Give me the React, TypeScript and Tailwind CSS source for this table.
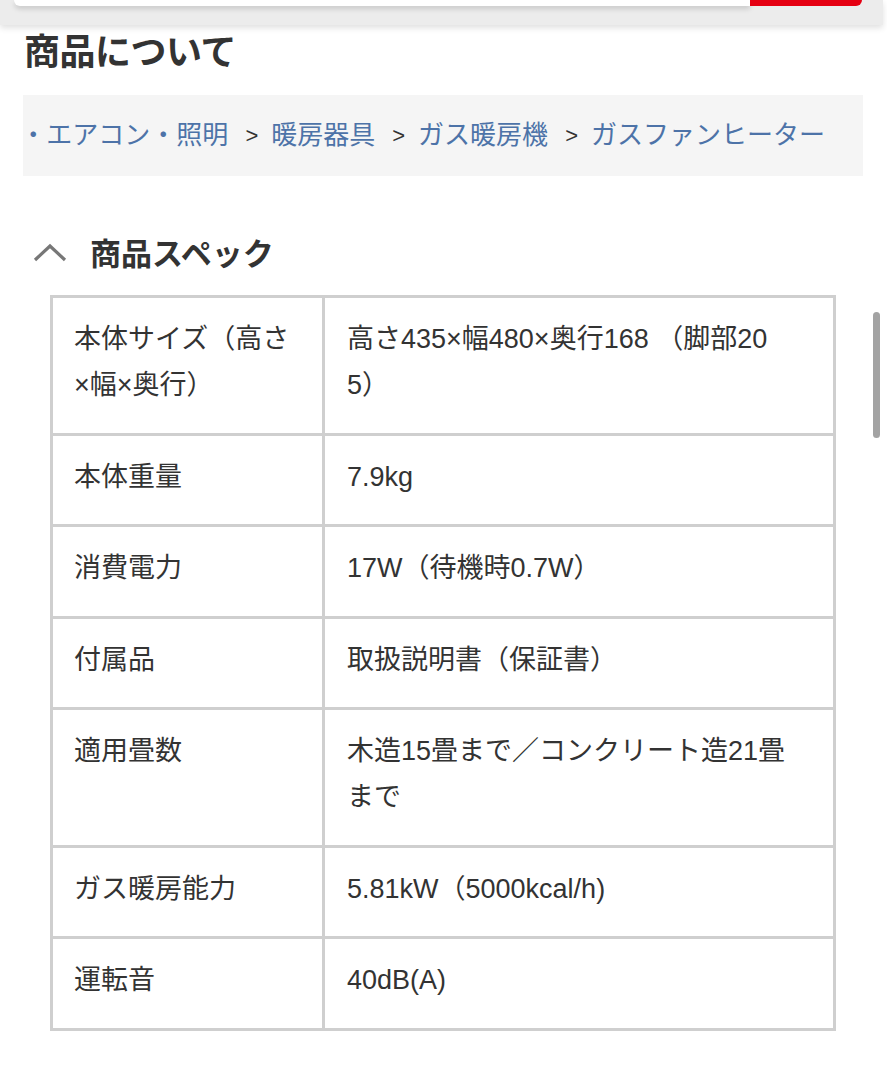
const specs: [string, string][] = [
  ["本体サイズ（高さ\n×幅×奥行）", "高さ435×幅480×奥行168 （脚部20\n5）"],
  ["本体重量", "7.9kg"],
  ["消費電力", "17W（待機時0.7W）"],
  ["付属品", "取扱説明書（保証書）"],
  ["適用畳数", "木造15畳まで／コンクリート造21畳\nまで"],
  ["ガス暖房能力", "5.81kW（5000kcal/h)"],
  ["運転音", "40dB(A)"],
]

const crumbs = ["季節家電・エアコン・照明", "暖房器具", "ガス暖房機", "ガスファンヒーター"]

const App = () => {
  return (
    <div
      className="relative min-h-[1080px] bg-white text-[#333]"
      style={{ fontFamily: '"Liberation Sans", "Noto Sans CJK JP", sans-serif' }}
    >
      {/* header (scrolled away, only the bottom edge shows) */}
      <div className="h-[25px] bg-[#ececec] pl-[14px] pr-[21px] shadow-[0_3px_6px_rgba(0,0,0,0.12)] relative z-10 mr-[4px]">
        <div className="flex h-[6px]">
          <div className="flex-1 bg-white rounded-bl-md shadow-[0_3px_5px_rgba(0,0,0,0.15)]" />
          <div className="w-[112px] bg-[#e50012] rounded-br-md" />
        </div>
      </div>

      <div className="pl-[23px] pr-[24px]">
        <h2
          className="mt-[4px] text-[36px] leading-[41px] font-bold tracking-[-0.5px] pl-px"
          style={{ fontFamily: '"Noto Sans CJK JP", sans-serif' }}
        >
          商品について
        </h2>

        {/* breadcrumb, scrolled to its right end */}
        <div className="mt-[25px] h-[81px] bg-[#f5f5f5] flex justify-end items-center overflow-hidden pr-[38px] whitespace-nowrap">
          {crumbs.map((c, i) => (
            <div key={i} className="flex items-center shrink-0">
              {i > 0 && <span className="text-[22px] text-[#333] ml-[17px] mr-[13px]">&gt;</span>}
              <span className="text-[26px] text-[#4d73a8]">{c}</span>
            </div>
          ))}
        </div>

        <div className="mt-[56px] flex items-center h-[40px]">
          <svg width="34" height="20" viewBox="0 0 34 20" className="ml-[10px]">
            <path d="M2 18 L17 4 L32 18" fill="none" stroke="#777" strokeWidth="3.2" />
          </svg>
          <h3
            className="ml-[23px] text-[31px] font-bold leading-[40px]"
            style={{ fontFamily: '"Noto Sans CJK JP", sans-serif' }}
          >
            商品スペック
          </h3>
        </div>

        <div className="mt-[23px] mx-[27px]">
          <table className="w-full table-fixed border-collapse border-[3px] border-[#cfcfcf]">
            <colgroup>
              <col className="w-[272px]" />
              <col />
            </colgroup>
            <tbody>
              {specs.map(([k, v]) => (
                <tr key={k}>
                  <td className="border-[3px] border-[#cfcfcf] align-top pl-[21px] pr-[16px] pt-[18px] pb-[24.5px] text-[27px] leading-[46px] whitespace-pre-line">
                    {k}
                  </td>
                  <td className="border-[3px] border-[#cfcfcf] align-top pl-[22px] pr-[16px] pt-[18px] pb-[24.5px] text-[27px] leading-[46px] whitespace-pre-line">
                    {v}
                  </td>
                </tr>
              ))}
            </tbody>
          </table>
        </div>
      </div>

      {/* overlay scrollbar */}
      <div className="absolute right-[7px] top-[312px] w-[7px] h-[126px] rounded-full bg-[#a3a3a3]" />
    </div>
  )
}

export default App
